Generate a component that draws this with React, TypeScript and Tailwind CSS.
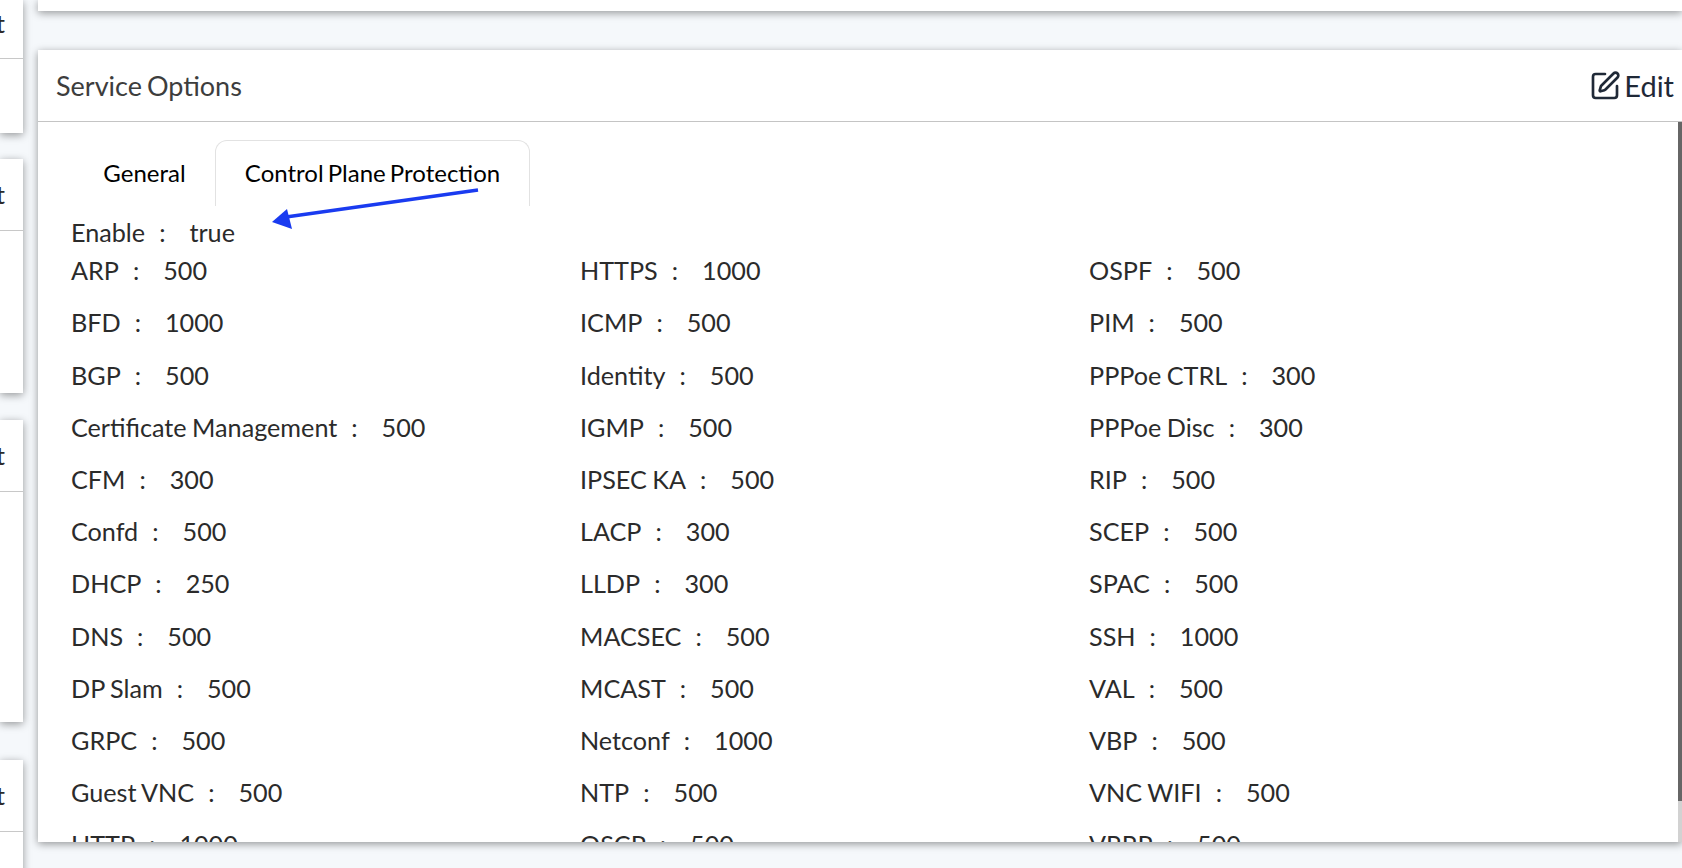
import React from "react";
import { SquarePen } from "lucide-react";

const rows: [string, string][][] = [
  [["ARP", "500"], ["HTTPS", "1000"], ["OSPF", "500"]],
  [["BFD", "1000"], ["ICMP", "500"], ["PIM", "500"]],
  [["BGP", "500"], ["Identity", "500"], ["PPPoe CTRL", "300"]],
  [["Certificate Management", "500"], ["IGMP", "500"], ["PPPoe Disc", "300"]],
  [["CFM", "300"], ["IPSEC KA", "500"], ["RIP", "500"]],
  [["Confd", "500"], ["LACP", "300"], ["SCEP", "500"]],
  [["DHCP", "250"], ["LLDP", "300"], ["SPAC", "500"]],
  [["DNS", "500"], ["MACSEC", "500"], ["SSH", "1000"]],
  [["DP Slam", "500"], ["MCAST", "500"], ["VAL", "500"]],
  [["GRPC", "500"], ["Netconf", "1000"], ["VBP", "500"]],
  [["Guest VNC", "500"], ["NTP", "500"], ["VNC WIFI", "500"]],
  [["HTTP", "1000"], ["OSCP", "500"], ["VRRP", "500"]],
];

function Pair({ label, value }: { label: string; value: string }) {
  return (
    <div className="flex items-center h-[52.2px] text-[25.2px] text-[#2b2b2b] whitespace-nowrap [word-spacing:-1px]">
      <span>{label}</span>
      <span className="ml-[14px]">:</span>
      <span className="ml-[24px]">{value}</span>
    </div>
  );
}

function SideCard({ height, divider, mt, extra }: { height: string; divider: string; mt: string; extra?: string }) {
  return (
    <div className={`bg-white w-full shadow-[0_2px_8px_rgba(0,0,0,0.4)] overflow-hidden shrink-0 ${height} ${mt}`}>
      <div className={`flex items-center justify-end pr-[18px] border-b border-[#c8c8c8] text-[25px] text-[#2b2b2b] ${divider} ${extra ?? ""}`}>
        <span className="shrink-0">Edit</span>
      </div>
    </div>
  );
}

export default function App() {
  return (
    <div className="h-[868px] w-[1682px] overflow-hidden bg-[#f5f8fb] flex font-['Lato','Liberation_Sans',sans-serif]">
      <div className="w-[23px] shrink-0 flex flex-col">
        <SideCard height="h-[133px]" divider="h-[59px]" mt="mt-0" extra="pb-[10px]" />
        <SideCard height="h-[234px]" divider="h-[72px]" mt="mt-[26px]" />
        <SideCard height="h-[302px]" divider="h-[72px]" mt="mt-[27px]" />
        <SideCard height="h-[200px]" divider="h-[72px]" mt="mt-[38px]" />
      </div>
      <div className="ml-[15px] flex-1 min-w-0 flex flex-col">
        <div className="h-[11px] bg-white shrink-0 shadow-[0_2px_8px_rgba(0,0,0,0.4)]" />
        <div className="relative mt-[39px] h-[792px] bg-white shrink-0 shadow-[0_2px_8px_rgba(0,0,0,0.4)] flex flex-col">
          <div className="h-[72px] shrink-0 flex items-center justify-between pl-[18px] pr-[8px] border-b border-[#c4c4c4]">
            <span className="text-[27px] text-[#3d3d3d] [word-spacing:-2px] pt-[2px]">Service Options</span>
            <span className="flex items-center gap-[3px] text-[29px] text-[#1f2937]">
              <SquarePen size={32} strokeWidth={2} />
              Edit
            </span>
          </div>
          <div className="flex-1 min-h-0 flex">
            <div className="flex-1 min-w-0 overflow-hidden">
              <div className="flex pt-[18px] pl-[30px] h-[84px] text-[24px] text-black [word-spacing:-2px]">
                <div className="w-[147px] pl-[6px] pb-[1px] flex items-center justify-center">General</div>
                <div className="w-[315px] pb-[1px] flex items-center justify-center border border-b-0 border-[#e2e2e2] rounded-t-[12px]">
                  Control Plane Protection
                </div>
              </div>
              <div className="pl-[33px]">
                <div className="flex items-center h-[26px] pt-[2px] mt-[13px] text-[25.2px] text-[#2b2b2b]">
                  <span>Enable</span>
                  <span className="ml-[14px]">:</span>
                  <span className="ml-[24px]">true</span>
                </div>
                <div className="grid grid-cols-[509px_509px_509px]">
                  {rows.map((r) =>
                    r.map(([l, v]) => <Pair key={l} label={l} value={v} />)
                  )}
                </div>
              </div>
            </div>
            <div className="w-[4px] shrink-0 bg-[#d2d2d2]">
              <div className="h-[679px] bg-[#666666]" />
            </div>
          </div>
          <svg className="absolute left-[180px] top-[130px]" width="270" height="50" viewBox="0 0 270 50">
            <line x1="260" y1="10" x2="68" y2="37" stroke="#1a3bf0" strokeWidth="3.5" />
            <polygon points="54,42 69,29 74,49" fill="#1a3bf0" />
          </svg>
        </div>
      </div>
    </div>
  );
}
